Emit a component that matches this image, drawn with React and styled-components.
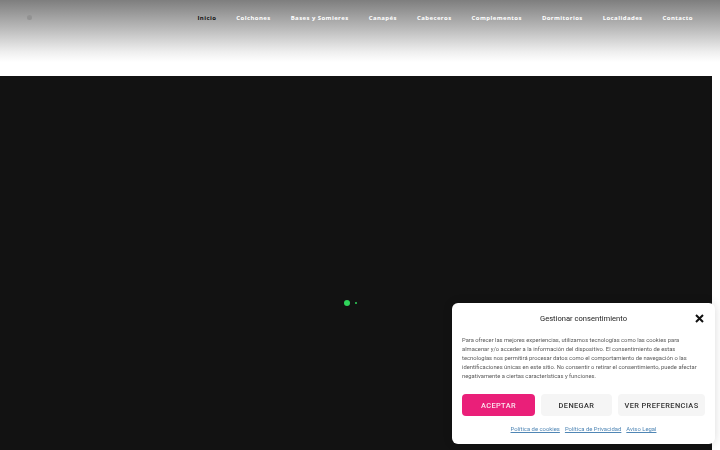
import React from "react";
import styled, { createGlobalStyle } from "styled-components";

const Global = createGlobalStyle`
  html, body { margin: 0; padding: 0; background: #fff; }
  body { font-family: "Roboto", "Liberation Sans", sans-serif; overflow: hidden; }
`;

const Page = styled.div`
  width: 720px;
  height: 450px;
  display: flex;
  flex-direction: column;
`;

const Header = styled.header`
  height: 76px;
  flex: none;
  background: linear-gradient(to bottom, #7e7e7e 0px, #b9b9b9 28px, #efefef 52px, #ffffff 62px, #ffffff 76px);
  display: flex;
  align-items: flex-start;
  justify-content: space-between;
  padding: 0 27px 0 27px;
  box-sizing: border-box;
`;

const Logo = styled.div`
  width: 5px;
  height: 5px;
  border-radius: 50%;
  background: #929292;
  margin-top: 15px;
`;

const Nav = styled.nav`
  display: flex;
  gap: 20px;
  padding-top: 13px;
`;

const NavItem = styled.a`
  font-family: "Open Sans", "Liberation Sans", sans-serif;
  font-weight: 700;
  font-size: 6px;
  letter-spacing: 0.42px;
  line-height: 10px;
  color: ${(p) => (p.$active ? "#111" : "#fff")};
  text-decoration: none;
  white-space: nowrap;
`;

const Hero = styled.section`
  width: 712px;
  flex: 1;
  background: #121212;
  display: flex;
  align-items: center;
  justify-content: center;
  gap: 5px;
  padding-right: 11px;
  box-sizing: border-box;
`;

const Dot = styled.span`
  width: ${(p) => p.$size}px;
  height: ${(p) => p.$size}px;
  border-radius: 50%;
  background: #2fd45a;
  margin-top: 80px;
`;

const Banner = styled.div`
  position: fixed;
  left: 452px;
  top: 303px;
  width: 263px;
  height: 141px;
  box-sizing: border-box;
  background: #fff;
  border-radius: 6px;
  box-shadow: 0 0 10px rgba(0, 0, 0, 0.15);
  padding: 9px 10px 0 10px;
  display: flex;
  flex-direction: column;
`;

const TitleRow = styled.div`
  position: relative;
  display: flex;
  justify-content: center;
  align-items: center;
  height: 13px;
`;

const Title = styled.div`
  font-size: 7.6px;
  color: #222;
`;

const Close = styled.button`
  position: absolute;
  right: 0;
  top: 1px;
  border: 0;
  background: none;
  padding: 0;
  width: 11px;
  height: 11px;
  display: flex;
`;

const Body = styled.p`
  margin: 11px 0 0 0;
  font-size: 5.8px;
  line-height: 9px;
  color: #5a5a5a;
  white-space: nowrap;
`;

const Buttons = styled.div`
  display: grid;
  grid-template-columns: 73px 71px 87px;
  gap: 6px;
  margin-top: 13px;
`;

const Btn = styled.button`
  height: 22px;
  border: 0;
  border-radius: 4px;
  font-family: "Roboto", "Liberation Sans", sans-serif;
  font-weight: 500;
  font-size: 7.4px;
  letter-spacing: 0.4px;
  padding: 0;
  background: ${(p) => (p.$primary ? "#ea1f79" : "#f5f5f5")};
  color: ${(p) => (p.$primary ? "#fbe3ee" : "#333")};
`;

const Links = styled.div`
  display: flex;
  justify-content: center;
  gap: 5px;
  margin-top: 10px;
`;

const LinkA = styled.a`
  font-size: 5.9px;
  color: #4f86b5;
  text-decoration: underline;
`;

const navItems = [
  "Inicio",
  "Colchones",
  "Bases y Somieres",
  "Canapés",
  "Cabeceros",
  "Complementos",
  "Dormitorios",
  "Localidades",
  "Contacto",
];

const bodyLines = [
  "Para ofrecer las mejores experiencias, utilizamos tecnologías como las cookies para",
  "almacenar y/o acceder a la información del dispositivo. El consentimiento de estas",
  "tecnologías nos permitirá procesar datos como el comportamiento de navegación o las",
  "identificaciones únicas en este sitio. No consentir o retirar el consentimiento, puede afectar",
  "negativamente a ciertas características y funciones.",
];

export default function App() {
  return (
    <>
      <Global />
      <Page>
        <Header>
          <Logo />
          <Nav>
            {navItems.map((n, i) => (
              <NavItem key={n} $active={i === 0}>
                {n}
              </NavItem>
            ))}
          </Nav>
        </Header>
        <Hero>
          <Dot $size={6} />
          <Dot $size={2} />
        </Hero>
      </Page>
      <Banner>
        <TitleRow>
          <Title>Gestionar consentimiento</Title>
          <Close aria-label="Cerrar">
            <svg width="11" height="11" viewBox="0 0 11 11">
              <path d="M2 2 L9 9 M9 2 L2 9" stroke="#111" strokeWidth="2" strokeLinecap="butt" />
            </svg>
          </Close>
        </TitleRow>
        <Body>
          {bodyLines.map((l, i) => (
            <React.Fragment key={i}>
              {l}
              {i < bodyLines.length - 1 && <br />}
            </React.Fragment>
          ))}
        </Body>
        <Buttons>
          <Btn $primary>ACEPTAR</Btn>
          <Btn>DENEGAR</Btn>
          <Btn>VER PREFERENCIAS</Btn>
        </Buttons>
        <Links>
          <LinkA>Política de cookies</LinkA>
          <LinkA>Política de Privacidad</LinkA>
          <LinkA>Aviso Legal</LinkA>
        </Links>
      </Banner>
    </>
  );
}
